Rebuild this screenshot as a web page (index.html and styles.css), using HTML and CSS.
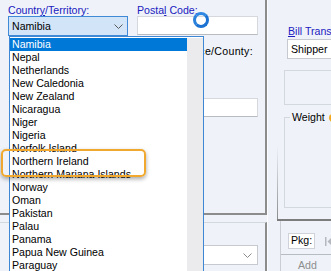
FILE: index.html
```html
<!DOCTYPE html>
<html>
<head>
<meta charset="utf-8">
<link rel="stylesheet" href="styles.css">
</head>
<body>
<div class="window">
  <div class="left">
    <div class="group addr">
      <div class="form">
        <label class="lbl req">Countr<u>y</u>/Territory:</label>
        <label class="lbl req">Posta<u>l</u> Code:</label>
        <div class="combo focus"><span>Namibia</span><svg class="chev" width="9" height="5" viewBox="0 0 9 5"><path d="M0.5 0.5 L4.5 4.5 L8.5 0.5" fill="none" stroke="#5a5a5a"/></svg></div>
        <div class="textbox"></div>
        <label class="lbl col2 state-lbl">State/Province/County:</label>
        <div class="textbox col2 state"></div>
        <label class="lbl req col2 city-lbl">Town/Suburb:</label>
        <div class="textbox col2 city"></div>
      </div>
    </div>
    <div class="group lower">
      <div class="combo wide"><span></span><svg class="chev light" width="9" height="5" viewBox="0 0 9 5"><path d="M0.5 0.5 L4.5 4.5 L8.5 0.5" fill="none" stroke="#8a8a8a"/></svg></div>
    </div>
  </div>
  <div class="right">
    <label class="lbl req bill"><u>B</u>ill Transportation To:</label>
    <div class="combo shipper"><span>Shipper</span></div>
    <div class="panel-box"></div>
    <div class="weight-wrap">
      <fieldset class="weight">
        <legend>Weight<span class="info"></span></legend>
        <div class="weight-body"></div>
      </fieldset>
    </div>
    <div class="tabs">
      <div class="tabstrip">
        <span class="tab">Pkg:</span>
        <svg class="first" width="7" height="9" viewBox="0 0 7 9"><rect x="0" y="0" width="1.5" height="9" fill="#b5b9bf"/><path d="M7 0 L2.5 4.5 L7 9Z" fill="#b5b9bf"/></svg>
      </div>
      <div class="add">Add</div>
    </div>
  </div>
</div>

<div class="droplist">
  <ul class="items">
    <li class="sel">Namibia</li>
    <li>Nepal</li>
    <li>Netherlands</li>
    <li>New Caledonia</li>
    <li>New Zealand</li>
    <li>Nicaragua</li>
    <li>Niger</li>
    <li>Nigeria</li>
    <li>Norfolk Island</li>
    <li>Northern Ireland</li>
    <li>Northern Mariana Islands</li>
    <li>Norway</li>
    <li>Oman</li>
    <li>Pakistan</li>
    <li>Palau</li>
    <li>Panama</li>
    <li>Papua New Guinea</li>
    <li>Paraguay</li>
  </ul>
  <div class="scrollbar"></div>
</div>
<div class="callout"></div>
<div class="busy"></div>
</body>
</html>
```

FILE: styles.css
```css
* { box-sizing: border-box; }
html, body { margin: 0; padding: 0; }
body {
  width: 331px;
  height: 271px;
  overflow: hidden;
  position: relative;
  background: #eff3f9;
  font-family: "Liberation Sans", Arial, sans-serif;
  font-size: 10.6px;
  color: #000;
}
.window { display: flex; height: 271px; }

.left { width: 267px; flex: none; display: flex; flex-direction: column; }
.group { border-right: 2px solid #8c8c8c; }
.addr {
  height: 215px;
  border-bottom: 2px solid #8c8c8c;
  padding: 4px 0 0 8px;
}
.form {
  display: grid;
  grid-template-columns: 120px 121px;
  column-gap: 9px;
  align-items: start;
}
.lbl { display: block; line-height: 12px; white-space: nowrap; }
.lbl u { text-decoration-thickness: 1px; text-underline-offset: 1px; }
.req { color: #2020c0; }
.col2 { grid-column: 2; }

.combo {
  height: 20px;
  border: 1px solid #c6cad0;
  background: #fff;
  display: flex;
  align-items: center;
  padding-left: 3px;
  line-height: 12px;
  white-space: nowrap;
}
.combo.focus { background: #d2e5f8; border-color: #3f89d6; }
.chev { margin-left: auto; margin-right: 4px; flex: none; }
.chev.light { margin-right: 5px; }
.textbox {
  height: 19px;
  background: #fff;
  border: 1px solid #d5d8dd;
  border-bottom-color: #b8bbc0;
}
.state-lbl { margin-top: 9px; letter-spacing: 0.3px; padding-left: 1px; }
.state { width: 60px; margin-top: 1px; }
.city-lbl { margin-top: 7px; }
.city { margin-top: 2px; }

.lower {
  flex: 1;
  margin-top: 7px;
  border-top: 1px solid #d3d7de;
  padding: 22px 0 0 137px;
}
.combo.wide { width: 121px; }

.right {
  flex: 1;
  min-width: 0;
  overflow: hidden;
  border-left: 1px solid #fbfcfe;
  display: flex;
  flex-direction: column;
}
.bill { margin: 25px 0 0 20px; overflow: hidden; }
.shipper { margin: 2px 0 0 19px; width: 80px; }
.panel-box {
  margin: 11px 0 0 16px;
  height: 36px;
  width: 80px;
  border: 1px solid #d3d7de;
}
.weight-wrap {
  margin-left: 9px;
  padding: 6px 0 11px 7px;
  border-bottom: 2px solid #7c7c7c;
  background: linear-gradient(to bottom, rgba(140,140,140,0) 0%, rgba(140,140,140,0) 35%, #8c8c8c 100%) no-repeat 0 0 / 1px 100%;
}
.weight {
  margin: 0;
  padding: 0;
  min-width: 0;
  width: 100px;
  border: 1px solid #d3d7de;
}
.weight legend {
  margin-left: 5px;
  padding: 0 2px;
  line-height: 13px;
  white-space: nowrap;
}
.info {
  display: inline-block;
  width: 8px;
  height: 8px;
  border-radius: 50%;
  background: #f3a81e;
  margin-left: 4px;
  vertical-align: -1px;
}
.weight-body { height: 83px; }

.tabs {
  flex: 1;
  margin-left: 12px;
  border-left: 1px solid #cacdd4;
}
.tabstrip {
  display: flex;
  align-items: center;
  padding: 12px 0 5px 7px;
  border-bottom: 1px solid #b7bbc2;
}
.tab {
  background: #fff;
  border: 1px solid #cfd2d8;
  padding: 0 2px 2px 2px;
  line-height: 12px;
}
.first { margin-left: 10px; flex: none; }
.add { margin: 4px 0 0 17px; line-height: 12px; color: #8e8e8e; }

.droplist {
  position: absolute;
  left: 9px;
  top: 36px;
  width: 195px;
  height: 240px;
  border: 1px solid #3d87d5;
  background: #fff;
  display: flex;
  padding-top: 1px;
}
.items { list-style: none; margin: 0; padding: 0; flex: 1; min-width: 0; }
.items li {
  height: 13px;
  line-height: 13px;
  padding-left: 2px;
  white-space: nowrap;
}
.items li.sel { background: #0078d7; color: #fff; }
.scrollbar { width: 16px; flex: none; background: #ebebee; }

.callout {
  position: absolute;
  left: 1px;
  top: 149px;
  width: 145px;
  height: 28px;
  border: 2.5px solid #f1a82f;
  border-radius: 5px;
  box-shadow: 0 2px 4px rgba(0,0,0,0.35);
}
.busy {
  position: absolute;
  left: 193px;
  top: 12px;
  width: 16px;
  height: 16px;
  border-radius: 50%;
  border: 3px solid #1b72d2;
  border-top-color: #2f88e2;
  border-left-color: #2a82dc;
}
```
